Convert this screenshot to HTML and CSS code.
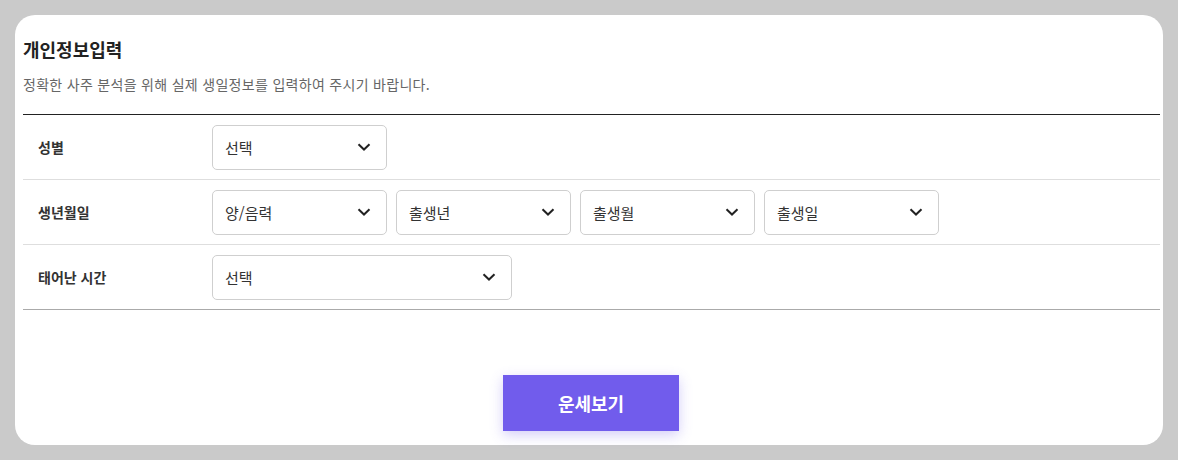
FILE: index.html
```html
<!DOCTYPE html>
<html lang="ko">
<head>
<meta charset="utf-8">
<link rel="stylesheet" href="styles.css">
</head>
<body>
<div class="card">
  <h2 class="title">개인정보입력</h2>
  <p class="desc">정확한 사주 분석을 위해 실제 생일정보를 입력하여 주시기 바랍니다.</p>
  <div class="table">
    <div class="row">
      <div class="label">성별</div>
      <div class="fields">
        <div class="select">선택<svg class="chev" viewBox="0 0 14 8"><path d="M1.5 1.2 L7 6.5 L12.5 1.2"/></svg></div>
      </div>
    </div>
    <div class="row">
      <div class="label">생년월일</div>
      <div class="fields">
        <div class="select">양/음력<svg class="chev" viewBox="0 0 14 8"><path d="M1.5 1.2 L7 6.5 L12.5 1.2"/></svg></div>
        <div class="select">출생년<svg class="chev" viewBox="0 0 14 8"><path d="M1.5 1.2 L7 6.5 L12.5 1.2"/></svg></div>
        <div class="select">출생월<svg class="chev" viewBox="0 0 14 8"><path d="M1.5 1.2 L7 6.5 L12.5 1.2"/></svg></div>
        <div class="select">출생일<svg class="chev" viewBox="0 0 14 8"><path d="M1.5 1.2 L7 6.5 L12.5 1.2"/></svg></div>
      </div>
    </div>
    <div class="row last">
      <div class="label">태어난 시간</div>
      <div class="fields">
        <div class="select wide">선택<svg class="chev" viewBox="0 0 14 8"><path d="M1.5 1.2 L7 6.5 L12.5 1.2"/></svg></div>
      </div>
    </div>
  </div>
  <div class="actions">
    <button class="btn">운세보기</button>
  </div>
</div>
</body>
</html>
```
FILE: styles.css
```css
html, body {
  margin: 0;
  padding: 0;
}
body {
  background: #cacaca;
  padding: 15px;
  font-family: "Noto Sans CJK KR", "Noto Sans", sans-serif;
  color: #222;
}
.card {
  background: #fff;
  border-radius: 20px;
  height: 430px;
  box-sizing: border-box;
  padding: 22px 3px 0 8px;
}
.title {
  margin: 0;
  font-size: 18px;
  font-weight: 700;
  line-height: 24px;
  color: #222;
}
.desc {
  margin: 14px 0 0;
  font-size: 14px;
  letter-spacing: 0.3px;
  line-height: 18px;
  color: #666;
}
.table {
  margin-top: 21px;
  border-top: 1px solid #222;
}
.row {
  display: flex;
  align-items: center;
  height: 64px;
  border-bottom: 1px solid #dedede;
}
.row.last {
  border-bottom: 1px solid #aaa;
}
.label {
  width: 174px;
  padding-left: 15px;
  font-size: 14px;
  font-weight: 700;
  color: #333;
}
.fields {
  display: flex;
  gap: 9px;
}
.select {
  width: 175px;
  height: 45px;
  box-sizing: border-box;
  border: 1px solid #cfcfcf;
  border-radius: 5px;
  display: flex;
  align-items: center;
  justify-content: space-between;
  padding: 0 15px 0 12px;
  font-size: 15px;
  color: #333;
}
.select.wide {
  width: 300px;
}
.chev {
  width: 14px;
  height: 8px;
  fill: none;
  stroke: #222;
  stroke-width: 2;
}
.actions {
  display: flex;
  justify-content: center;
  margin-top: 65px;
  padding-right: 1px;
}
.btn {
  width: 176px;
  height: 56px;
  border: 0;
  background: #715cec;
  color: #fff;
  font-family: inherit;
  font-size: 18px;
  font-weight: 700;
  box-shadow: 0 4px 12px rgba(113, 92, 236, 0.3);
}
```
